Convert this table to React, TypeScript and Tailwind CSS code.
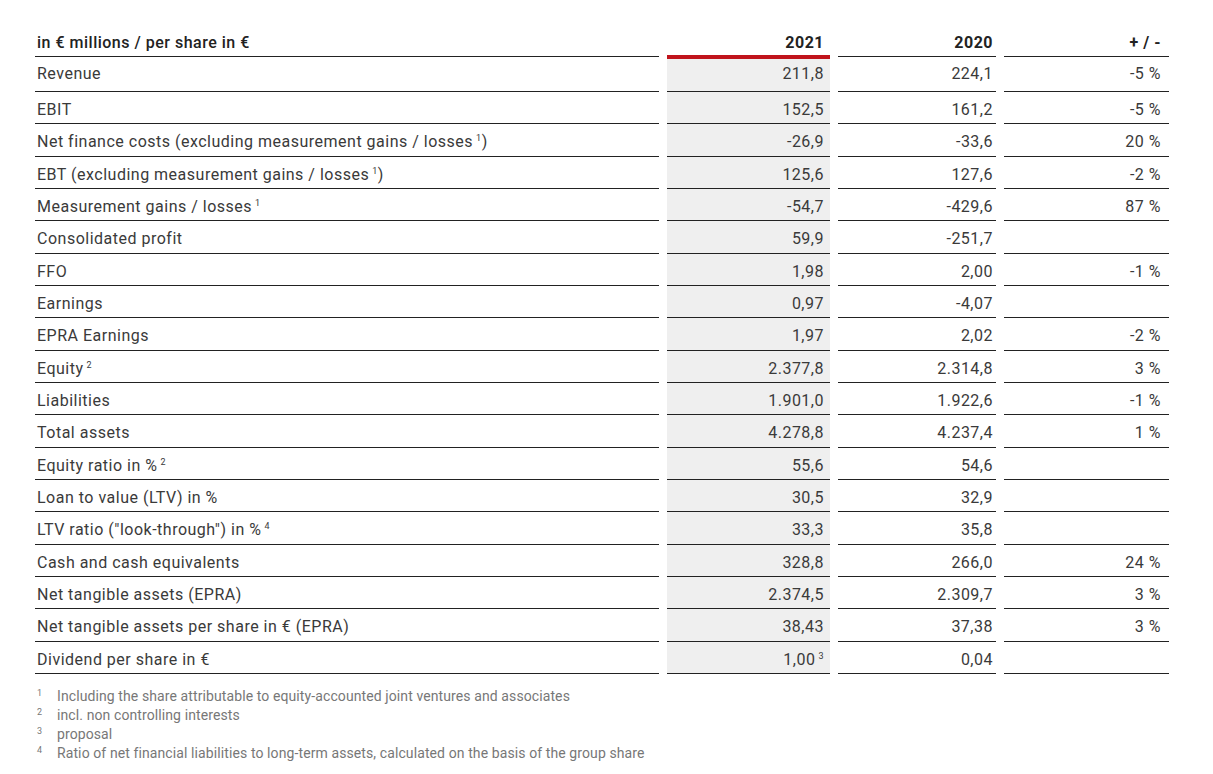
import React from "react";

type Row = {
    label: React.ReactNode;
    cur: React.ReactNode;
    prev: string;
    diff: string;
};

const Sup = ({ n }: { n: string }) => (
    <sup className="text-[9px] ml-[3px] relative -top-[6px]">{n}</sup>
);

const rows: Row[] = [
    { label: "Revenue", cur: "211,8", prev: "224,1", diff: "-5 %" },
    { label: "EBIT", cur: "152,5", prev: "161,2", diff: "-5 %" },
    { label: <>Net finance costs (excluding measurement gains / losses<Sup n="1" />)</>, cur: "-26,9", prev: "-33,6", diff: "20 %" },
    { label: <>EBT (excluding measurement gains / losses<Sup n="1" />)</>, cur: "125,6", prev: "127,6", diff: "-2 %" },
    { label: <>Measurement gains / losses<Sup n="1" /></>, cur: "-54,7", prev: "-429,6", diff: "87 %" },
    { label: "Consolidated profit", cur: "59,9", prev: "-251,7", diff: "" },
    { label: "FFO", cur: "1,98", prev: "2,00", diff: "-1 %" },
    { label: "Earnings", cur: "0,97", prev: "-4,07", diff: "" },
    { label: "EPRA Earnings", cur: "1,97", prev: "2,02", diff: "-2 %" },
    { label: <>Equity<Sup n="2" /></>, cur: "2.377,8", prev: "2.314,8", diff: "3 %" },
    { label: "Liabilities", cur: "1.901,0", prev: "1.922,6", diff: "-1 %" },
    { label: "Total assets", cur: "4.278,8", prev: "4.237,4", diff: "1 %" },
    { label: <>Equity ratio in %<Sup n="2" /></>, cur: "55,6", prev: "54,6", diff: "" },
    { label: "Loan to value (LTV) in %", cur: "30,5", prev: "32,9", diff: "" },
    { label: <>LTV ratio ("look-through") in %<Sup n="4" /></>, cur: "33,3", prev: "35,8", diff: "" },
    { label: "Cash and cash equivalents", cur: "328,8", prev: "266,0", diff: "24 %" },
    { label: "Net tangible assets (EPRA)", cur: "2.374,5", prev: "2.309,7", diff: "3 %" },
    { label: "Net tangible assets per share in € (EPRA)", cur: "38,43", prev: "37,38", diff: "3 %" },
    { label: "Dividend per share in €", cur: <>1,00<Sup n="3" /></>, prev: "0,04", diff: "" },
];

const notes = [
    { n: "1", text: "Including the share attributable to equity-accounted joint ventures and associates" },
    { n: "2", text: "incl. non controlling interests" },
    { n: "3", text: "proposal" },
    { n: "4", text: "Ratio of net financial liabilities to long-term assets, calculated on the basis of the group share" },
];

function App() {
    return (
        <div className="min-h-screen bg-white pl-[35px] pt-[32px] text-[#3a3a3a] font-['Roboto',sans-serif]">
            <div className="grid grid-cols-[624px_163px_158px_165px] gap-x-2 text-[16px] leading-4 tracking-[0.5px]">
                <div className="h-[25px] mb-[2px] pt-[3px] border-b border-[#222] pl-[2px] font-medium text-[#222]">in € millions / per share in €</div>
                <div className="h-[27px] pt-[3px] border-b-4 border-[#c0141c] text-right pr-[6px] font-bold text-[#222]">2021</div>
                <div className="h-[25px] mb-[2px] pt-[3px] border-b border-[#222] text-right pr-[3px] font-bold text-[#222]">2020</div>
                <div className="h-[25px] mb-[2px] pt-[3px] border-b border-[#222] text-right pr-[8px] font-bold text-[#222]">+ / -</div>

                {rows.map((r, i) => {
                    const h = i === 0 ? "h-[33px] pt-[7px]" : "h-[32.33px] pt-[10px]";
                    return (
                        <React.Fragment key={i}>
                            <div className={`${h} border-b border-[#222] pl-[2px]`}>{r.label}</div>
                            <div className={`${h} border-b border-[#222] bg-[#efefef] text-right pr-[6px]`}>{r.cur}</div>
                            <div className={`${h} border-b border-[#222] text-right pr-[3px]`}>{r.prev}</div>
                            <div className={`${h} border-b border-[#222] text-right pr-[8px]`}>{r.diff}</div>
                        </React.Fragment>
                    );
                })}
            </div>

            <div className="mt-[13px] text-[14px] leading-[19px] tracking-[0.1px] text-[#777]">
                {notes.map((f) => (
                    <div key={f.n} className="flex">
                        <span className="w-[22px] pl-[2px] text-[9px] -mt-[3px]">{f.n}</span>
                        <span>{f.text}</span>
                    </div>
                ))}
            </div>
        </div>
    );
}

export default App;
